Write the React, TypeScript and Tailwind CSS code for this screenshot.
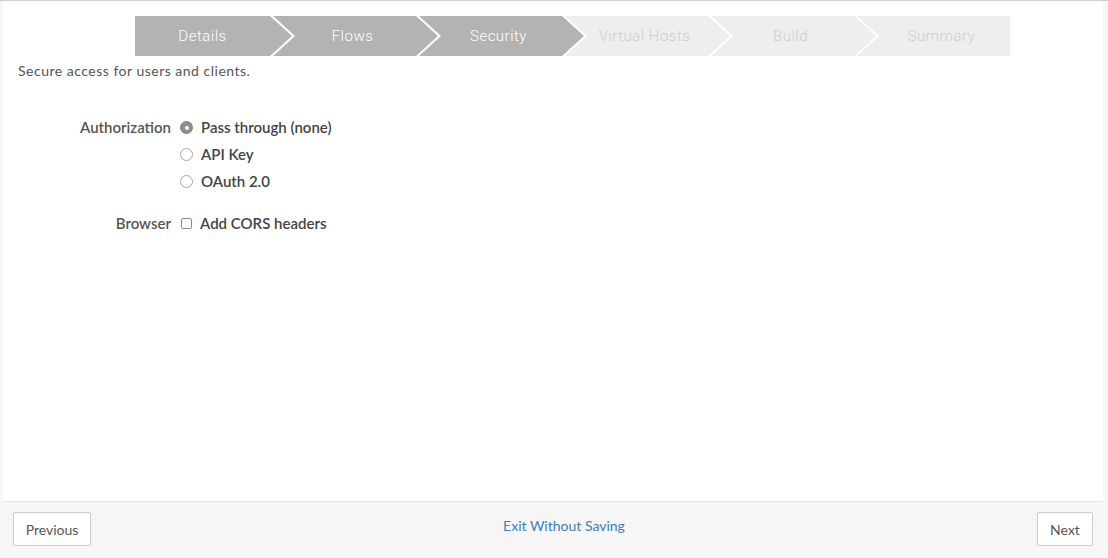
import { useState } from 'react';

const STEPS = [
  { name: 'Details', done: true },
  { name: 'Flows', done: true },
  { name: 'Security', done: true },
  { name: 'Virtual Hosts', done: false },
  { name: 'Build', done: false },
  { name: 'Summary', done: false },
];

const AUTH_OPTIONS = ['Pass through (none)', 'API Key', 'OAuth 2.0'];

// chevron shapes, written out so Tailwind picks them up
const CLIP_FIRST = '[clip-path:polygon(0_0,calc(100%_-_22px)_0,100%_50%,calc(100%_-_22px)_100%,0_100%)]';
const CLIP_MID = '[clip-path:polygon(0_0,calc(100%_-_22px)_0,100%_50%,calc(100%_-_22px)_100%,0_100%,22px_50%)]';
const CLIP_LAST = '[clip-path:polygon(0_0,100%_0,100%_100%,0_100%,22px_50%)]';

function Radio({ checked }: { checked: boolean }) {
  return checked ? (
    <span className="w-[13px] h-[13px] rounded-full bg-[#8e8e8e] border border-[#808080] flex items-center justify-center shrink-0">
      <span className="w-[4px] h-[4px] rounded-full bg-white" />
    </span>
  ) : (
    <span className="w-[13px] h-[13px] rounded-full bg-white border border-[#a8a8a8] shrink-0" />
  );
}

export default function App() {
  const [auth, setAuth] = useState(0);
  const [cors, setCors] = useState(false);

  return (
    <div className="h-[558px] flex bg-[#f6f7f7] border-t border-[#cfcfcf] font-['Lato','Open_Sans',sans-serif]">
      <div className="ml-[3px] mr-[5px] flex-1 flex flex-col bg-white">
        <div className="flex-1">
          {/* Wizard */}
          <div className="flex w-[875px] ml-[132px] mt-[15px] h-[40px]">
            {STEPS.map((s, i) => {
              const last = i === STEPS.length - 1;
              const shape =
                i === 0
                  ? `${CLIP_FIRST} w-[157px] pr-[22px]`
                  : last
                  ? `${CLIP_LAST} flex-1 pl-[16px] -ml-[19px]`
                  : `${CLIP_MID} w-[165px] pl-[16px] pr-[22px] -ml-[19px]`;
              return (
                <div
                  key={s.name}
                  className={`shrink-0 flex items-center justify-center ${shape} ${
                    s.done ? 'bg-[#b3b3b3] text-white' : 'bg-[#eeeeee] text-[#cdcdcd]'
                  } font-['Roboto',sans-serif] font-light text-[15px] tracking-[0.5px]`}
                >
                  {s.name}
                </div>
              );
            })}
          </div>

          <p className="mt-[6px] pl-[15px] text-[14px] leading-[18px] text-[#555] tracking-[0.5px]">
            Secure access for users and clients.
          </p>

          {/* Form */}
          <div className="mt-[34px] flex flex-col gap-[15px] text-[15px] text-[#444]">
            <div className="flex">
              <div className="w-[168px] h-[27px] flex items-center justify-end font-semibold text-[#555]">Authorization</div>
              <div className="ml-[9px] flex flex-col">
                {AUTH_OPTIONS.map((o, i) => (
                  <label key={o} onClick={() => setAuth(i)} className="h-[27px] flex items-center gap-[8px] font-semibold cursor-pointer">
                    <Radio checked={auth === i} />
                    <span>{o}</span>
                  </label>
                ))}
              </div>
            </div>
            <div className="flex">
              <div className="w-[168px] h-[27px] flex items-center justify-end font-semibold text-[#555]">Browser</div>
              <label onClick={() => setCors(!cors)} className="ml-[10px] h-[27px] flex items-center gap-[8px] font-semibold cursor-pointer">
                <span className={`w-[11px] h-[11px] rounded-[2px] border border-[#8a8a8a] shrink-0 ${cors ? 'bg-[#8e8e8e]' : 'bg-white'}`} />
                <span>Add CORS headers</span>
              </label>
            </div>
          </div>
        </div>

        {/* Footer */}
        <div className="h-[57px] border-t border-[#e6e6e6] bg-[#f6f6f6] flex items-start px-[10px] pt-[10px]">
          <button className="h-[34px] w-[78px] bg-white border border-[#cccccc] rounded-[2px] text-[14px] text-[#555]">
            Previous
          </button>
          <div className="flex-1 flex justify-center pt-[3px]">
            <a className="text-[14px] text-[#3b7cbf] cursor-pointer">Exit Without Saving</a>
          </div>
          <button className="h-[34px] w-[56px] bg-white border border-[#cccccc] rounded-[2px] text-[14px] text-[#555]">
            Next
          </button>
        </div>
      </div>
    </div>
  );
}
